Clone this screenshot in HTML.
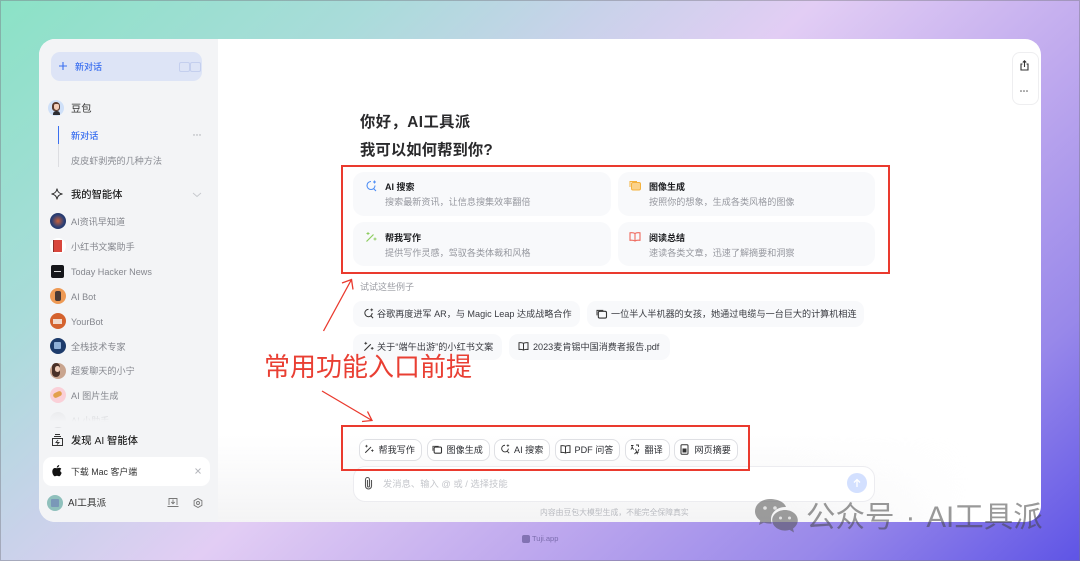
<!DOCTYPE html>
<html lang="zh">
<head>
<meta charset="utf-8">
<title>豆包</title>
<style>
html,body{margin:0;padding:0}
body{width:1080px;height:561px;overflow:hidden;position:relative;font-family:"Liberation Sans","Noto Sans CJK SC",sans-serif;background:linear-gradient(138deg,#8be2c6 0%,#a9dcda 22%,#c9d2ea 36%,#e2cdf4 48%,#c0aaee 66%,#9888ea 84%,#5e54e6 100%)}
.a{position:absolute}
.t{position:absolute;white-space:nowrap;line-height:20px;height:20px}
svg{position:absolute;overflow:visible}
.card{position:absolute;background:#f8f9fb;border-radius:11px}
.ct{position:absolute;left:32px;font-size:9px;font-weight:700;color:#1b1c1f;line-height:20px;white-space:nowrap}
.cs{position:absolute;left:32px;font-size:9.1px;color:#96989f;line-height:20px;white-space:nowrap}
.chip{position:absolute;background:#f8f9fb;border-radius:9px;height:25.5px}
.chip span{position:absolute;top:3px;font-size:9.1px;color:#3a3c42;line-height:20px;white-space:nowrap}
.btn{position:absolute;top:439px;height:19.5px;background:#fff;border:1px solid #dfe0e4;border-radius:8px}
.btn span{position:absolute;top:0;font-size:9.1px;color:#2c2e33;line-height:20px;white-space:nowrap}
.li{font-size:9.1px;color:#85878e;left:71px}
.av{position:absolute;left:49.5px;width:16px;height:16px;border-radius:50%}
.rb{position:absolute;border:2px solid #ea3a2e;box-sizing:border-box}
</style>
</head>
<body>
<div class="a" style="left:39px;top:39px;width:1002px;height:483px;background:#fff;border-radius:16px;overflow:hidden">
  <div class="a" style="left:0;top:0;width:179px;height:483px;background:#f3f4f6"></div>
  <div class="a" style="left:179px;top:395px;width:750px;height:88px;background:linear-gradient(180deg,rgba(244,244,245,0) 0%,rgba(244,244,245,1) 100%);-webkit-mask-image:linear-gradient(90deg,#000 75%,transparent 100%);mask-image:linear-gradient(90deg,#000 75%,transparent 100%)"></div>
</div>

<!-- sidebar top -->
<div class="a" style="left:51px;top:51.5px;width:151px;height:29px;background:#dde4f6;border-radius:9px"></div>
<svg style="left:58px;top:61px" width="10" height="10" viewBox="0 0 10 10"><path d="M5 1v8M1 5h8" stroke="#3a6ff0" stroke-width="1.1" fill="none"/></svg>
<div class="t" style="left:75px;top:57px;font-size:9px;font-weight:500;color:#3a6ff0">新对话</div>
<div class="a" style="left:179px;top:62px;width:9px;height:8px;border:1px solid #c4cfee;border-radius:2px"></div>
<div class="a" style="left:190px;top:62px;width:9px;height:8px;border:1px solid #c4cfee;border-radius:2px"></div>

<div class="av" style="left:48px;top:100px;background:#cfe0f8"></div>
<div class="a" style="left:52px;top:102px;width:8px;height:9px;border-radius:4px 4px 3px 3px;background:#5a3a2e"></div>
<div class="a" style="left:53.5px;top:104px;width:5px;height:6px;border-radius:2px 2px 3px 3px;background:#f3cdb8"></div>
<div class="a" style="left:52.5px;top:111px;width:7px;height:4px;border-radius:3px 3px 0 0;background:#2c2c30"></div>
<div class="t" style="left:71px;top:99.500px;font-size:10.3px;color:#333">豆包</div>
<div class="a" style="left:58px;top:126px;width:1.2px;height:18px;background:#3a6ff0"></div>
<div class="a" style="left:58px;top:144px;width:1px;height:23px;background:#dcdde1"></div>
<div class="t" style="left:71px;top:125.500px;font-size:9.1px;font-weight:500;color:#3a6ff0">新对话</div>
<svg style="left:193px;top:134px" width="9" height="2"><circle cx="1" cy="1" r=".7" fill="#a5a7ad"/><circle cx="4" cy="1" r=".7" fill="#a5a7ad"/><circle cx="7" cy="1" r=".7" fill="#a5a7ad"/></svg>
<div class="t" style="left:71px;top:150.500px;font-size:9.1px;color:#8a8c93">皮皮虾剥壳的几种方法</div>

<svg style="left:51px;top:188px" width="12" height="12" viewBox="0 0 12 12"><path d="M6 .5C6.4 4 8 5.6 11.5 6 8 6.4 6.4 8 6 11.5 5.6 8 4 6.4.5 6 4 5.6 5.6 4 6 .5Z" fill="none" stroke="#333" stroke-width="1"/></svg>
<div class="t" style="left:71px;top:185.500px;font-size:10.3px;font-weight:500;color:#222">我的智能体</div>
<svg style="left:192px;top:192px" width="10" height="6"><path d="M1 1l4 3.5L9 1" fill="none" stroke="#c6c8cd" stroke-width=".9"/></svg>

<!-- agents -->
<div class="av" style="top:213px;background:radial-gradient(circle,#c8603a 0,#2b3f75 55%,#1c2a55 100%)"></div>
<div class="t li" style="top:212px">AI资讯早知道</div>
<div class="av" style="top:238px;background:#fff"></div>
<div class="a" style="left:53px;top:240px;width:9px;height:12px;background:#d9473d;border-left:1.5px solid #8c2f2a;box-sizing:border-box"></div>
<div class="t li" style="top:237px">小红书文案助手</div>
<div class="a" style="left:51px;top:265px;width:13px;height:13px;background:#15161a;border-radius:2px"></div>
<div class="a" style="left:54px;top:270.5px;width:7px;height:1px;background:#ddd"></div>
<div class="t li" style="top:262px">Today Hacker News</div>
<div class="av" style="top:288px;background:#ee9a55"></div>
<div class="a" style="left:54.5px;top:291px;width:6px;height:10px;background:#4a3a35;border-radius:2px"></div>
<div class="t li" style="top:287px">AI Bot</div>
<div class="av" style="top:313px;background:#d4622e"></div>
<div class="a" style="left:53px;top:319px;width:9px;height:5px;background:#f0d9cc"></div>
<div class="t li" style="top:311.5px">YourBot</div>
<div class="av" style="top:338px;background:#1d3b6b"></div>
<div class="a" style="left:54px;top:342px;width:7px;height:7px;background:#8fb0d8;border-radius:1px"></div>
<div class="t li" style="top:336.5px">全栈技术专家</div>
<div class="av" style="top:362.5px;background:#c9a58f"></div>
<div class="a" style="left:52px;top:363px;width:8px;height:14px;background:#4a3128;border-radius:4px"></div>
<div class="a" style="left:55px;top:366px;width:5px;height:6px;background:#efcdb9;border-radius:3px"></div>
<div class="t li" style="top:361px">超爱聊天的小宁</div>
<div class="av" style="top:387px;background:#fad0d8"></div>
<div class="a" style="left:53px;top:392px;width:9px;height:5px;background:#e2a04c;border-radius:3px;transform:rotate(-25deg)"></div>
<div class="t li" style="top:386px">AI 图片生成</div>
<div class="av" style="top:412px;background:#e0e1e4"></div>
<div class="t li" style="top:411px">AI 小助手</div>
<div class="a" style="left:39px;top:409px;width:179px;height:18px;background:linear-gradient(180deg,rgba(243,244,246,.4),#f3f4f6 70%)"></div>

<svg style="left:51px;top:433px" width="13" height="14" viewBox="0 0 13 14"><path d="M1.500 5.500h10v7h-10zM3 3.500h7M4 1.500h5" fill="none" stroke="#333" stroke-width="1"/><path d="M7 7l-2 2.500h3L6 11.500" fill="none" stroke="#333" stroke-width=".9"/></svg>
<div class="t" style="left:71px;top:431.500px;font-size:10.3px;font-weight:500;color:#222">发现 AI 智能体</div>

<div class="a" style="left:43px;top:457px;width:167px;height:29px;background:#fff;border-radius:9px"></div>
<svg style="left:52px;top:465px" width="10" height="12" viewBox="0 0 10 12"><path d="M7.200 0C7.300 1.400 6 2.700 4.800 2.600 4.700 1.300 6 .1 7.200 0ZM5 3.200C5.700 3.200 6.300 2.700 7.200 2.700 8 2.700 8.800 3.100 9.300 3.900 7.800 4.800 8 7 9.700 7.700 9.200 9.100 8.200 11.300 7 11.300 6.200 11.300 5.900 10.800 5 10.800 4.100 10.800 3.800 11.300 3 11.300 1.700 11.300 .3 8.800.3 6.600.3 4.300 1.700 3 3 3 3.800 3 4.400 3.200 5 3.200Z" fill="#111"/></svg>
<div class="t" style="left:71px;top:461.500px;font-size:8.9px;color:#333">下载 Mac 客户端</div>
<svg style="left:195px;top:468px" width="6" height="6"><path d="M.5.5l5 5M5.500.5l-5 5" stroke="#b6b8bd" stroke-width="1"/></svg>

<div class="av" style="left:47px;top:495px;background:#8fc0bc"></div>
<div class="a" style="left:51px;top:499px;width:8px;height:8px;background:#7a98b8;border-radius:1px"></div>
<div class="t" style="left:68px;top:494px;font-size:9.700px;color:#333">AI工具派</div>
<svg style="left:167px;top:497px" width="12" height="11" viewBox="0 0 12 11"><path d="M2 8V1.500h8V8M.5 9.500h11M6 2.500v4M4.300 5l1.700 1.700L7.700 5" fill="none" stroke="#777" stroke-width=".9"/></svg>
<svg style="left:193px;top:498px" width="10" height="10" viewBox="0 0 10 10"><path d="M5 .5l3.900 2.200v4.600L5 9.500 1.100 7.300V2.700Z" fill="none" stroke="#777" stroke-width=".9"/><circle cx="5" cy="5" r="1.500" fill="none" stroke="#777" stroke-width=".9"/></svg>

<!-- top right -->
<div class="a" style="left:1011.5px;top:51.5px;width:25px;height:51px;border:1px solid #eeeef0;border-radius:8px;box-sizing:content-box;background:#fff"></div>
<svg style="left:1019.500px;top:59.500px" width="9" height="11" viewBox="0 0 9 11"><path d="M2.500 4H1v6h7V4H6.500M4.500 7V1M2.800 2.500L4.500.8l1.700 1.700" fill="none" stroke="#333" stroke-width="1.100"/></svg>
<svg style="left:1020px;top:90px" width="9" height="2"><circle cx="1" cy="1" r=".8" fill="#555"/><circle cx="4" cy="1" r=".8" fill="#555"/><circle cx="7" cy="1" r=".8" fill="#555"/></svg>

<!-- heading -->
<div class="t" style="left:360px;top:112.500px;font-size:15.300px;font-weight:700;color:#2a2a2c;letter-spacing:.45px">你好，AI工具派</div>
<div class="t" style="left:360px;top:140.500px;font-size:15.300px;font-weight:700;color:#2a2a2c;letter-spacing:.12px">我可以如何帮到你?</div>

<!-- cards -->
<div class="card" style="left:353px;top:172px;width:258px;height:44px"><div class="ct" style="top:5px">AI 搜索</div><div class="cs" style="top:20px">搜索最新资讯，让信息搜集效率翻倍</div></div>
<div class="card" style="left:618px;top:172px;width:257px;height:44px"><div class="ct" style="top:5px;left:31px">图像生成</div><div class="cs" style="top:20px;left:31px">按照你的想象，生成各类风格的图像</div></div>
<div class="card" style="left:353px;top:222px;width:258px;height:44px"><div class="ct" style="top:6px">帮我写作</div><div class="cs" style="top:21px">提供写作灵感，驾驭各类体裁和风格</div></div>
<div class="card" style="left:618px;top:222px;width:257px;height:44px"><div class="ct" style="top:6px;left:31px">阅读总结</div><div class="cs" style="top:21px;left:31px">速读各类文章，迅速了解摘要和洞察</div></div>

<svg style="left:365px;top:180px" width="12" height="12" viewBox="0 0 12 12"><path d="M6 1.500a4 4 0 1 0 4 4M8.500 8.500L11 11" fill="none" stroke="#4d8df5" stroke-width="1.100"/><path d="M9.500.5v3M8 2h3" stroke="#4d8df5" stroke-width=".9"/></svg>
<svg style="left:629px;top:180px" width="12" height="11" viewBox="0 0 12 11"><rect x="2.500" y="2.500" width="9" height="7.500" rx="1.500" fill="#fbd28a" stroke="#f4b23e"/><path d="M1 7V1.500h7" fill="none" stroke="#f4b23e"/></svg>
<svg style="left:365px;top:231px" width="12" height="12" viewBox="0 0 12 12"><path d="M1.500 10.500l7-7" stroke="#8ccc5e" stroke-width="1.200"/><path d="M3 1v3M1.500 2.500h3M10 6.500v3M8.500 8h3" stroke="#8ccc5e" stroke-width=".9"/></svg>
<svg style="left:629px;top:232px" width="12" height="10" viewBox="0 0 12 10"><path d="M6 1.500C4.500.6 3 .6 1 .8v7.500c2-.2 3.500-.2 5 .7 1.500-.9 3-.9 5-.7V.8C9 .6 7.500.6 6 1.500ZM6 1.500V9" fill="none" stroke="#ef6a5e" stroke-width="1.100"/></svg>

<div class="t" style="left:360px;top:276.500px;font-size:9px;color:#9a9ca3">试试这些例子</div>

<!-- example chips -->
<div class="chip" style="left:353px;top:301px;width:227px"><span style="left:24px">谷歌再度进军 AR，与 Magic Leap 达成战略合作</span></div>
<div class="chip" style="left:587px;top:301px;width:277px"><span style="left:24px">一位半人半机器的女孩，她通过电缆与一台巨大的计算机相连</span></div>
<div class="chip" style="left:353px;top:334px;width:149px"><span style="left:24px;letter-spacing:.08px">关于“端午出游”的小红书文案</span></div>
<div class="chip" style="left:509px;top:334px;width:161px"><span style="left:24px">2023麦肯锡中国消费者报告.pdf</span></div>
<svg style="left:363px;top:308px" width="11" height="11" viewBox="0 0 12 12"><path d="M6 1.500a4 4 0 1 0 4 4M8.500 8.500L11 11" fill="none" stroke="#333" stroke-width="1.100"/><path d="M9.500.5v3M8 2h3" stroke="#333" stroke-width=".9"/></svg>
<svg style="left:596px;top:309px" width="11" height="10" viewBox="0 0 12 11"><rect x="2.500" y="2.500" width="9" height="7.500" rx="1.500" fill="none" stroke="#333" stroke-width="1.200"/><path d="M1 7V1.500h7" fill="none" stroke="#333"/></svg>
<svg style="left:363px;top:341px" width="11" height="11" viewBox="0 0 12 12"><path d="M1.500 10.500l7-7" stroke="#333" stroke-width="1.200"/><path d="M3 1v3M1.500 2.500h3M10 6.500v3M8.500 8h3" stroke="#333" stroke-width=".9"/></svg>
<svg style="left:518px;top:342px" width="11" height="9" viewBox="0 0 12 10"><path d="M6 1.500C4.500.6 3 .6 1 .8v7.500c2-.2 3.500-.2 5 .7 1.500-.9 3-.9 5-.7V.8C9 .6 7.500.6 6 1.500ZM6 1.500V9" fill="none" stroke="#333" stroke-width="1.100"/></svg>

<!-- annotation -->
<div class="t" style="left:264px;top:351px;font-size:26px;line-height:32px;height:32px;color:#e93f33">常用功能入口前提</div>
<svg style="left:0;top:0" width="1080" height="561"><path d="M323.500 331L351.500 279.500M342 283l9.500-3.500 1.500 10M322 391L372 420.500M362 421.500l10-1-4.500-9" fill="none" stroke="#ea3a2e" stroke-width="1.300"/></svg>

<div class="rb" style="left:341px;top:165px;width:549px;height:109px"></div>

<!-- input -->
<div class="a" style="left:353px;top:465.500px;width:522px;height:36px;box-sizing:border-box;background:#fff;border:1px solid #ececf0;border-radius:12px"></div>
<svg style="left:364px;top:476px" width="9" height="14" viewBox="0 0 9 14"><path d="M7.500 4v6a3 3 0 0 1-6 0V3.500a2 2 0 0 1 4 0V10a1 1 0 0 1-2 0V4" fill="none" stroke="#555" stroke-width="1.100"/></svg>
<div class="t" style="left:383px;top:473.500px;font-size:9.300px;color:#c4c6cb">发消息、输入 @ 或 / 选择技能</div>
<div class="a" style="left:847px;top:473px;width:20px;height:20px;border-radius:50%;background:#d3e0ff"></div>
<svg style="left:852px;top:478px" width="10" height="10" viewBox="0 0 10 10"><path d="M5 9V1.500M2 4.500l3-3 3 3" fill="none" stroke="#fff" stroke-width="1.300"/></svg>
<div class="t" style="left:540px;top:503px;font-size:7.840px;color:#b9bbc0">内容由豆包大模型生成，不能完全保障真实</div>

<!-- skill buttons -->
<div class="btn" style="left:358.500px;width:61px"><span style="left:19px">帮我写作</span></div>
<div class="btn" style="left:426.500px;width:61px"><span style="left:19px">图像生成</span></div>
<div class="btn" style="left:494px;width:54px"><span style="left:19px">AI 搜索</span></div>
<div class="btn" style="left:555px;width:63px"><span style="left:18.500px">PDF 问答</span></div>
<div class="btn" style="left:625px;width:43px"><span style="left:18.500px">翻译</span></div>
<div class="btn" style="left:674px;width:61.500px"><span style="left:19.500px">网页摘要</span></div>
<svg style="left:364px;top:444px" width="10" height="10" viewBox="0 0 12 12"><path d="M1.500 10.500l7-7" stroke="#333" stroke-width="1.200"/><path d="M3 1v3M1.500 2.500h3M10 6.500v3M8.500 8h3" stroke="#333" stroke-width=".9"/></svg>
<svg style="left:432px;top:445px" width="10" height="9" viewBox="0 0 12 11"><rect x="2.500" y="2.500" width="9" height="7.500" rx="1.500" fill="none" stroke="#333" stroke-width="1.300"/><path d="M1 7V1.500h7" fill="none" stroke="#333"/></svg>
<svg style="left:500px;top:444px" width="10" height="10" viewBox="0 0 12 12"><path d="M6 1.500a4 4 0 1 0 4 4M8.500 8.500L11 11" fill="none" stroke="#333" stroke-width="1.100"/><path d="M9.500.5v3M8 2h3" stroke="#333" stroke-width=".9"/></svg>
<svg style="left:560px;top:445px" width="11" height="9" viewBox="0 0 12 10"><path d="M6 1.500C4.500.6 3 .6 1 .8v7.500c2-.2 3.500-.2 5 .7 1.500-.9 3-.9 5-.7V.8C9 .6 7.500.6 6 1.500ZM6 1.500V9" fill="none" stroke="#333" stroke-width="1.100"/></svg>
<svg style="left:630px;top:444px" width="10" height="11" viewBox="0 0 10 11"><path d="M1 1.500h2.500M2.200 1.500C2.200 3.500 1.500 5 .8 5.500M2.200 3c.3 1 .9 2 1.600 2.500M6 1h2.500v2M8.500 8.500H6L4.500 10M5.500 5l1.700 4.500L9 5" fill="none" stroke="#333" stroke-width=".9"/></svg>
<svg style="left:680px;top:444px" width="9" height="11" viewBox="0 0 9 11"><rect x="1" y=".8" width="7" height="9.400" rx="1" fill="none" stroke="#333" stroke-width="1"/><rect x="2.500" y="4.500" width="4" height="4" fill="#333"/></svg>

<div class="rb" style="left:341px;top:425px;width:409px;height:46px"></div>

<!-- tuji -->
<div class="a" style="left:522px;top:535px;width:8px;height:8px;background:rgba(70,60,120,.5);border-radius:2px"></div>
<div class="t" style="left:532px;top:529px;font-size:7.500px;color:rgba(70,60,120,.55)">Tuji.app</div>

<!-- watermark -->
<svg style="left:755px;top:499px" width="43" height="35" viewBox="0 0 43 35"><path d="M15 0C6.700 0 0 5.500 0 12.300c0 3.700 2 7 5.200 9.300L4 26l4.800-2.400c2 .6 4 1 6.200 1 .6 0 1.200 0 1.800-.1C16.300 23 16 21.500 16 20c0-6.700 6.400-12 14.200-12 .3 0 .5 0 .8 0C29.500 3.300 22.900 0 15 0Z" fill="rgba(80,80,80,.55)"/><path d="M30 11c-7 0-12.800 4.600-12.800 10.300S23 31.600 30 31.600c1.600 0 3.200-.3 4.600-.7L39 33.500 38 29.600c2.900-2 4.800-5 4.800-8.300C42.800 15.600 37 11 30 11Z" fill="rgba(80,80,80,.55)"/><circle cx="10" cy="9" r="1.800" fill="#fff" opacity=".7"/><circle cx="20" cy="9" r="1.800" fill="#fff" opacity=".7"/><circle cx="25.500" cy="19" r="1.500" fill="#fff" opacity=".7"/><circle cx="34.500" cy="19" r="1.500" fill="#fff" opacity=".7"/></svg>
<div class="t" style="left:806px;top:500px;font-size:29.500px;line-height:36px;height:36px;color:rgba(70,70,70,.55)">公众号<span style="margin:0 11px">·</span>AI工具派</div>

<div class="a" style="left:0;top:0;width:1080px;height:561px;box-sizing:border-box;border:1px solid rgba(120,120,130,.45);pointer-events:none"></div>
</body>
</html>
